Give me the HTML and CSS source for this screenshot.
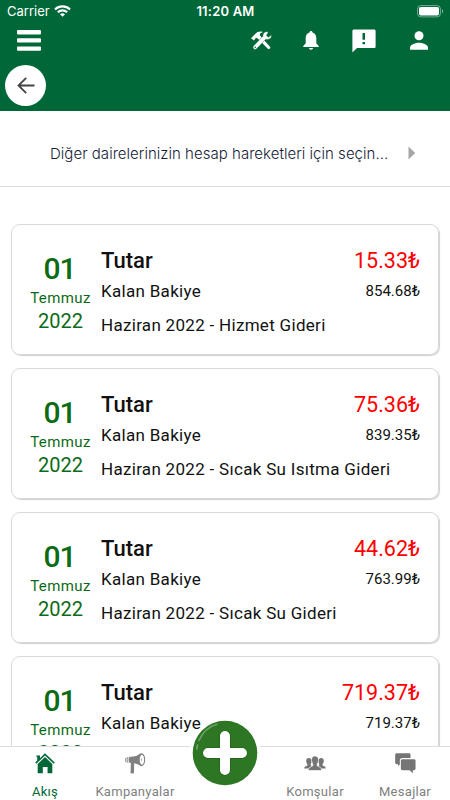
FILE: index.html
```html
<!DOCTYPE html>
<html lang="tr">
<head>
  <meta charset="UTF-8">
  <meta name="viewport" content="width=device-width, initial-scale=1.0">
  <title>Hesap Hareketleri</title>
  <link rel="stylesheet" href="styles.css">
</head>
<body>
  <div class="app">
    <header class="header">
      <div class="status-bar">
        <div class="carrier">
          <span>Carrier</span>
          <svg width="17" height="12" viewBox="0 0 17 12" fill="none" stroke="#fff" stroke-width="2.1">
            <path d="M1 4.4C5.2.4 11.8.4 16 4.4"/>
            <path d="M3.8 7.2c2.7-2.5 6.7-2.5 9.4 0"/>
            <path d="M8.5 11.8L6 9.2c1.4-1.3 3.6-1.3 5 0z" fill="#fff" stroke="none"/>
          </svg>
        </div>
        <div class="time">11:20 AM</div>
        <svg class="battery" width="27" height="13" viewBox="0 0 27 13">
          <rect x=".6" y=".6" width="22.8" height="11.3" rx="3.2" fill="none" stroke="#fff" stroke-opacity=".45"/>
          <rect x="2" y="2" width="20" height="8.5" rx="1.8" fill="#fff"/>
          <path d="M25 4.3c1.6.7 1.6 3.3 0 4z" fill="#fff" fill-opacity=".5"/>
        </svg>
      </div>

      <div class="toolbar">
        <button class="menu-btn" aria-label="Menü">
          <svg width="24" height="21" viewBox="0 0 24 21" fill="#fff">
            <rect width="24" height="4.4" rx="1"/>
            <rect y="8.2" width="24" height="4.4" rx="1"/>
            <rect y="16.4" width="24" height="4.4" rx="1"/>
          </svg>
        </button>
        <button class="tools-btn" aria-label="Arıza">
          <svg width="22" height="20" viewBox="0 0 22 20" fill="#fff">
            <path d="M0 7.2L3.9 3.2C6.3.8 8.4.2 11.2.7L11.5 1.5C9.3 1.8 8.6 2.8 9 4.4L19 15.7c1 1.2-.9 3.3-2.2 2.1L6.5 7.2l-1.6-.4L3 9.4z"/>
            <path d="M20.3 4.1l-2.8 2.1-2.1-1.8L17.3 1C14.4-.1 11.5 2 12 5.2L2.7 14.7c-2 1.9.8 5.1 2.9 3l9.2-9.5c3.5.9 6.1-1.3 5.5-4.1z" stroke="#006738" stroke-width=".4"/>
            <circle cx="4.2" cy="16.2" r=".8" fill="#006738"/>
          </svg>
        </button>
        <button class="bell-btn" aria-label="Bildirimler">
          <svg width="16" height="19" viewBox="0 0 16 19" fill="#fff">
            <path d="M8 0c1 0 1.5.7 1.5 1.5C12 2.1 13.3 4.4 13.3 7v5.2l2.4 2.8v1.1H.3V15l2.4-2.8V7c0-2.6 1.3-4.9 3.8-5.5C6.5.7 7 0 8 0zM6 17h4c0 1.1-.9 1.7-2 1.7S6 18.1 6 17z"/>
          </svg>
        </button>
        <button class="feedback-btn" aria-label="Geri bildirim">
          <svg width="24" height="24" viewBox="0 0 24 24" fill="#fff">
            <path fill-rule="evenodd" d="M22 .4H2C1 .4.4 1 .4 2v21.5L5 19h17c1 0 1.6-.6 1.6-1.6V2c0-1-.6-1.6-1.6-1.6zM13 15.3h-2.5V13H13zm0-4.6h-2.5V4H13z"/>
          </svg>
        </button>
        <button class="user-btn" aria-label="Profil">
          <svg width="18" height="19" viewBox="0 0 18 19" fill="#fff">
            <circle cx="9" cy="4.7" r="4.5"/>
            <path d="M0 18.8v-2.3c0-3 5.9-4.7 9-4.7s9 1.7 9 4.7v2.3z"/>
          </svg>
        </button>
      </div>

      <button class="back-btn" aria-label="Geri">
        <svg width="18" height="17" viewBox="0 0 18 17" fill="none" stroke="#444" stroke-width="1.8">
          <path d="M17.5 8.5H1.5M9.2.8L1.5 8.5l7.7 7.7"/>
        </svg>
      </button>
    </header>

    <div class="selector">
      <span>Diğer dairelerinizin hesap hareketleri için seçin...</span>
      <svg width="8" height="14" viewBox="0 0 8 14"><path d="M.5.5L7.2 7 .5 13.5z" fill="#a6a6a6"/></svg>
    </div>

    <main class="list">
      <div class="card">
        <div class="date">
          <div class="day">01</div>
          <div class="month">Temmuz</div>
          <div class="year">2022</div>
        </div>
        <div class="details">
          <div class="row total"><b>Tutar</b><span class="amount">15.33₺</span></div>
          <div class="row balance"><span>Kalan Bakiye</span><span class="remaining">854.68₺</span></div>
          <div class="description">Haziran 2022 - Hizmet Gideri</div>
        </div>
      </div>

      <div class="card">
        <div class="date">
          <div class="day">01</div>
          <div class="month">Temmuz</div>
          <div class="year">2022</div>
        </div>
        <div class="details">
          <div class="row total"><b>Tutar</b><span class="amount">75.36₺</span></div>
          <div class="row balance"><span>Kalan Bakiye</span><span class="remaining">839.35₺</span></div>
          <div class="description">Haziran 2022 - Sıcak Su Isıtma Gideri</div>
        </div>
      </div>

      <div class="card">
        <div class="date">
          <div class="day">01</div>
          <div class="month">Temmuz</div>
          <div class="year">2022</div>
        </div>
        <div class="details">
          <div class="row total"><b>Tutar</b><span class="amount">44.62₺</span></div>
          <div class="row balance"><span>Kalan Bakiye</span><span class="remaining">763.99₺</span></div>
          <div class="description">Haziran 2022 - Sıcak Su Gideri</div>
        </div>
      </div>

      <div class="card">
        <div class="date">
          <div class="day">01</div>
          <div class="month">Temmuz</div>
          <div class="year">2022</div>
        </div>
        <div class="details">
          <div class="row total"><b>Tutar</b><span class="amount">719.37₺</span></div>
          <div class="row balance"><span>Kalan Bakiye</span><span class="remaining">719.37₺</span></div>
        </div>
      </div>
    </main>

    <nav class="tab-bar">
      <a class="tab active">
        <svg width="22" height="23" viewBox="0 0 22 23" fill="#006738">
          <path d="M1.5 2.7h4v3L11 .3l10.7 10.1-1.2 1.3L11 2.8 1.5 11.7.3 10.4l2.2-2.1V4.2h-1z"/>
          <path d="M11 4.5l8 7.6v10.2h-5.2v-7H8.600v7H3V12.100z"/>
        </svg>
        <span>Akış</span>
      </a>
      <a class="tab">
        <svg width="22" height="23" viewBox="0 0 22 23" fill="#808080">
          <path fill-rule="evenodd" d="M5 4.2c5 .2 9-1.2 12.3-3.900 3.200-.6 4.900 3 4.900 7s-2 7.600-4.900 7.100c-2-1.600-4.500-2.700-7.200-3.100l-.2 10.400c0 1-3.800 1-3.800 0L6.500 11 5 10.800c-1.500-1.800-1.500-4.800 0-6.600zM18.600 1.900c-1.400 0-2.400 2.400-2.400 5.400s1 5.400 2.400 5.400 2.400-2.400 2.400-5.400-1-5.400-2.400-5.400z"/>
          <path d="M3.500 4.200c-1.500 2-1.500 4.700 0 6.700M1.600 5c-1.200 1.600-1.200 3.600 0 5.200" fill="none" stroke="#808080"/>
          <path d="M17.700 5.500c1 .5 1 3.200 0 3.700z"/>
        </svg>
        <span>Kampanyalar</span>
      </a>
      <div class="tab"></div>
      <a class="tab">
        <svg width="24" height="23" viewBox="0 0 24 23" fill="#757575">
          <path d="M5.300 5.500c2 0 3.200 1.800 3 4-.1 1.700-1.100 2.200-1.100 3.500 0 .8.9 1.200 1.800 1.500-2 .7-2.700 1.500-3 2.500H.2c0-2 1-2.300 3-3.100 1-.5.500-1.700-.2-2.700-1.400-2.700-.6-5.700 2.300-5.700zM18.700 5.500c-2 0-3.200 1.800-3 4 .1 1.700 1.100 2.200 1.100 3.500 0 .8-.9 1.200-1.800 1.500 2 .7 2.700 1.500 3 2.500h5.800c0-2-1-2.300-3-3.100-1-.5-.5-1.700.2-2.700 1.400-2.700.6-5.700-2.300-5.700z"/>
          <path d="M12 3.300c2.800 0 4.200 2.200 3.800 5-.2 1.900-1.200 3-1.500 4.500-.2 1.300.7 1.700 2 2.200 2 .8 3 1.600 3 4.200H4.700c0-2.600 1-3.400 3-4.200 1.300-.5 2.200-.9 2-2.200-.3-1.500-1.300-2.600-1.500-4.500-.4-2.800 1-5 3.800-5z" stroke="#fff" stroke-width=".7"/>
        </svg>
        <span>Komşular</span>
      </a>
      <a class="tab">
        <svg width="23" height="23" viewBox="0 0 23 23" fill="#757575">
          <path d="M2 .3h13.500c1 0 1.500.6 1.500 1.500v3.700H8C6.200 5.500 5.300 6.500 5.300 8v4.500l-2 1.700v-2H2c-1.200 0-1.800-.6-1.800-1.700V2C.2 1 .9.300 2 .3z"/>
          <path d="M8.300 6.800h12.300c1.200 0 1.900.7 1.900 1.800v8.500c0 1.200-.7 1.800-1.800 1.800h-1.200v3.400L16 18.900H8.300c-1.200 0-1.900-.6-1.900-1.800V8.600c0-1.100.7-1.800 1.900-1.800z"/>
        </svg>
        <span>Mesajlar</span>
      </a>
      <button class="add-btn" aria-label="Ekle">
        <svg width="66" height="66" viewBox="0 0 66 66">
          <circle cx="33" cy="33" r="32.300" fill="#2d7623"/>
          <path d="M33 16v34M16 33h34" stroke="#1f5e1a" stroke-width="11.200" stroke-linecap="round"/>
          <path d="M33 16v34M16 33h34" stroke="#fff" stroke-width="10" stroke-linecap="round"/>
          <path d="M4.800 29l.7-4M7 20.500C10.500 12.500 17 6.500 25 4.300" fill="none" stroke="#6ba364" stroke-width="1.700" stroke-linecap="round"/>
        </svg>
      </button>
    </nav>
  </div>
</body>
</html>
```
FILE: styles.css
```css
* {
  box-sizing: border-box;
}
body {
  margin: 0;
  font-family: Roboto, "Noto Sans", sans-serif;
  background-color: #fff;
  color: #111;
}
button {
  padding: 0;
  border: none;
  background: none;
  cursor: pointer;
}
svg {
  display: block;
}
.app {
  display: flex;
  flex-direction: column;
  height: 800px;
  overflow: hidden;
}
.header {
  flex: none;
  height: 111px;
  background-color: #006738;
  color: white;
}
.status-bar {
  display: grid;
  grid-template-columns: 1fr auto 1fr;
  align-items: center;
  height: 22px;
  padding: 0 6px 0 7px;
  font-family: Inter, sans-serif;
  font-size: 13px;
}
.carrier {
  display: flex;
  align-items: center;
  gap: 4px;
}
.time {
  font-weight: 600;
  letter-spacing: 0.2px;
}
.battery {
  justify-self: end;
}
.toolbar {
  display: flex;
  align-items: center;
  height: 37px;
  padding: 0 22px 0 17px;
}
.tools-btn {
  margin-left: auto;
}
.bell-btn {
  margin-left: 30px;
}
.feedback-btn {
  margin-left: 33px;
}
.user-btn {
  margin-left: 34px;
}
.back-btn {
  display: flex;
  align-items: center;
  justify-content: center;
  width: 41px;
  height: 41px;
  margin: 6px 0 0 5px;
  border-radius: 50%;
  background-color: white;
}
.selector {
  display: flex;
  flex: none;
  align-items: center;
  justify-content: space-between;
  height: 76px;
  padding: 9px 34px 0 50px;
  border-bottom: 1px solid #dedede;
  font-family: Inter, sans-serif;
  font-size: 15px;
  font-weight: 300;
  letter-spacing: 0.03px;
  color: #151c38;
}
.list {
  display: flex;
  flex: 1;
  flex-direction: column;
  gap: 13px;
  min-height: 0;
  padding: 37px 11px 0;
  overflow: hidden;
}
.card {
  display: flex;
  flex: none;
  height: 131px;
  padding: 21px 18px 0;
  border: 1px solid #d9d9d9;
  border-radius: 9px;
  box-shadow: 1px 1px 1px #d0d0d0;
}
.date {
  width: 61px;
  color: #0b6b16;
  text-align: center;
}
.day {
  margin-top: 5px;
  font-size: 30px;
  line-height: 36px;
  font-weight: 500;
  letter-spacing: -1px;
  text-indent: -2px;
}
.month {
  font-size: 15px;
  line-height: 22px;
  letter-spacing: 0.4px;
}
.year {
  font-size: 20px;
  line-height: 24px;
}
.details {
  flex: 1;
  margin-left: 10px;
  font-size: 17px;
  letter-spacing: 0.3px;
}
.row {
  display: flex;
  align-items: center;
  justify-content: space-between;
}
.total {
  height: 28px;
  font-size: 22px;
  letter-spacing: 0;
}
.total b {
  font-weight: 500;
}
.amount {
  font-size: 21.5px;
  color: #f00;
}
.balance {
  height: 33px;
}
.remaining {
  font-size: 15px;
  letter-spacing: 0;
}
.description {
  line-height: 36px;
}
.tab-bar {
  position: relative;
  display: flex;
  flex: none;
  height: 54px;
  background: linear-gradient(to right, #ddd 190px, white 190px 260px, #ddd 260px) top / 100% 1px no-repeat;
}
.tab {
  display: flex;
  flex: 1;
  flex-direction: column;
  align-items: center;
  padding-top: 7px;
  font-size: 13px;
  line-height: 17px;
  letter-spacing: 0.3px;
  color: #808080;
}
.tab span {
  margin-top: 9px;
}
.tab.active {
  color: #006738;
}
/* overlaps the list above the tab bar */
.add-btn {
  position: absolute;
  left: 192px;
  top: -26px;
}
```
